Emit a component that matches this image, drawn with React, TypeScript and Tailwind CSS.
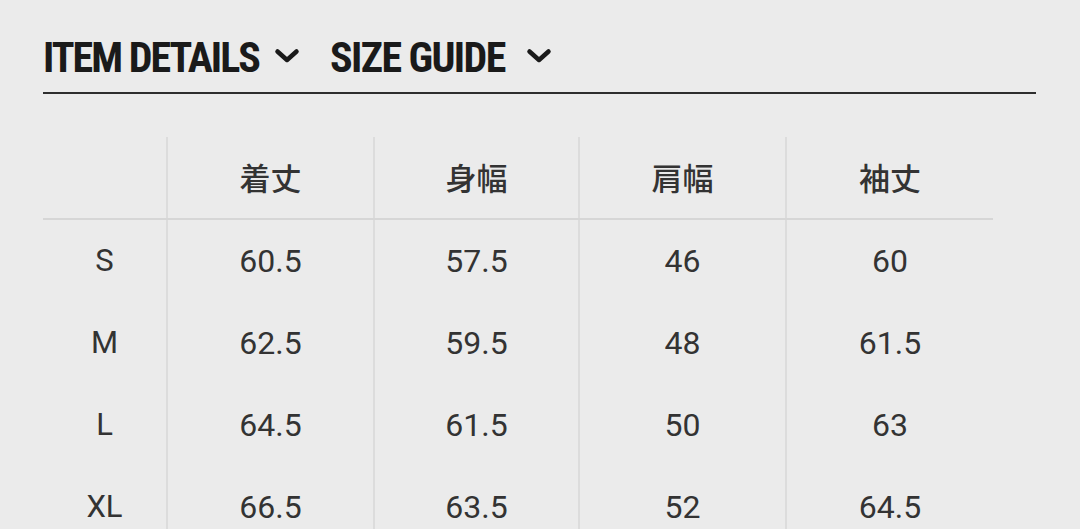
const columns = ["着丈", "身幅", "肩幅", "袖丈"];

const rows = [
  { size: "S", values: ["60.5", "57.5", "46", "60"] },
  { size: "M", values: ["62.5", "59.5", "48", "61.5"] },
  { size: "L", values: ["64.5", "61.5", "50", "63"] },
  { size: "XL", values: ["66.5", "63.5", "52", "64.5"] },
];

function Chevron({ className }: { className: string }) {
  return (
    <svg width="26" height="16" viewBox="0 0 26 16" className={`mt-[-5px] shrink-0 ${className}`}>
      <path d="M3.5 3.5 L13 12 L22.5 3.5" fill="none" stroke="#1a1a1a" strokeWidth="4.5" strokeLinecap="round" strokeLinejoin="round" />
    </svg>
  );
}

export default function App() {
  const gridCols = "grid grid-cols-[123px_207px_205px_207px_208px]";

  return (
    <div className="h-[529px] w-[1080px] overflow-hidden bg-[#ebebeb] px-[43px] pt-[37px] font-['Roboto',sans-serif]">
      <div className="flex w-[993px] items-center border-b-2 border-[#2e2e2e] pb-[13px]">
        <span className="font-['Liberation_Sans_Narrow','Roboto_Condensed',sans-serif] text-[42px] font-bold leading-none tracking-[-2px] text-[#1a1a1a]">
          ITEM DETAILS
        </span>
        <Chevron className="ml-[15px]" />
        <span className="ml-[30px] font-['Liberation_Sans_Narrow','Roboto_Condensed',sans-serif] text-[42px] font-bold leading-none tracking-[-1.6px] text-[#1a1a1a]">
          SIZE GUIDE
        </span>
        <Chevron className="ml-[21px]" />
      </div>

      <div className="mt-[43px] w-[950px]">
        <div className={`${gridCols} h-[83px] border-b-2 border-[#d6d6d6]`}>
          <div />
          {columns.map((c) => (
            <div
              key={c}
              className="flex items-center justify-center border-l-2 border-[#dcdcdc] font-['Noto_Sans_CJK_JP',sans-serif] text-[31px] font-medium text-[#333]"
            >
              {c}
            </div>
          ))}
        </div>
        {rows.map((r) => (
          <div key={r.size} className={`${gridCols} h-[82px]`}>
            <div className="flex items-center justify-center text-[31px] text-[#333]">{r.size}</div>
            {r.values.map((v, i) => (
              <div
                key={i}
                className="flex items-center justify-center border-l-2 border-[#dcdcdc] text-[32px] text-[#333]"
              >
                {v}
              </div>
            ))}
          </div>
        ))}
      </div>
    </div>
  );
}
